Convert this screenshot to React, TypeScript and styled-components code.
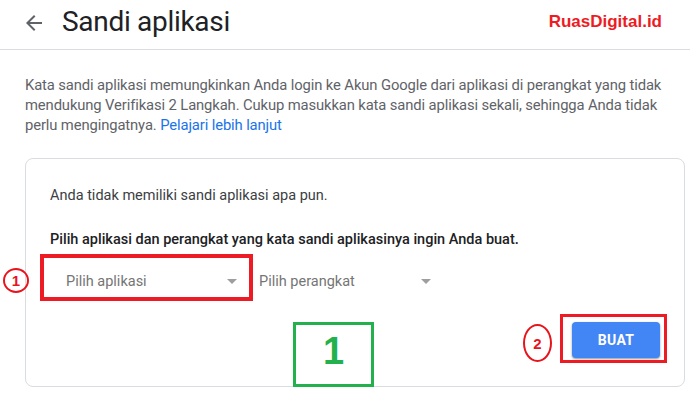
import styled, { createGlobalStyle } from 'styled-components';

const GlobalStyle = createGlobalStyle`
  body {
    margin: 0;
    background: #fff;
    font-family: Roboto, "Liberation Sans", Arial, sans-serif;
  }
`;

const Page = styled.div`
  position: relative;
  width: 690px;
  height: 395px;
  overflow: hidden;
`;

const Header = styled.header`
  display: flex;
  align-items: center;
  height: 49px;
  border-bottom: 1px solid #dadce0;
  padding-left: 22px;
`;

const BackButton = styled.span`
  display: flex;
  width: 24px;
  height: 24px;
  color: #5f6368;
  margin-top: -3px;
`;

const Title = styled.h1`
  margin: -6px 0 0 16px;
  font-size: 28px;
  font-weight: 400;
  color: #202124;
  letter-spacing: -0.3px;
  flex: 1;
`;

const Brand = styled.span`
  font-family: "Liberation Sans", Arial, sans-serif;
  font-weight: 700;
  font-size: 17px;
  color: #ed1c24;
  margin-right: 28px;
  margin-top: -6px;
`;

const Intro = styled.p`
  margin: 25px 0 0 25px;
  font-size: 14.8px;
  line-height: 20px;
  letter-spacing: -0.12px;
  color: #5f6368;
  white-space: nowrap;
`;

const Link = styled.a`
  color: #1a73e8;
  text-decoration: none;
`;

const Card = styled.section`
  margin: 23px 5px 0 25px;
  height: 229px;
  box-sizing: border-box;
  border: 1px solid #dadce0;
  border-radius: 8px;
  padding: 27px 24px 0 24px;
`;

const Text = styled.p<{ $strong?: boolean }>`
  margin: 0 0 24px;
  font-size: 14.5px;
  line-height: 20px;
  font-weight: ${p => (p.$strong ? 500 : 400)};
  color: ${p => (p.$strong ? '#202124' : '#3c4043')};
`;

const SelectRow = styled.div`
  display: flex;
  margin-top: -15px;
`;

const Select = styled.div<{ $width: number; $left: number; $right: number }>`
  display: flex;
  align-items: center;
  justify-content: space-between;
  height: 44px;
  width: ${p => p.$width}px;
  box-sizing: border-box;
  padding: 0 ${p => p.$right}px 0 ${p => p.$left}px;
  font-size: 14.5px;
  color: #757575;
`;

const Caret = styled.span`
  width: 0;
  height: 0;
  border-left: 5px solid transparent;
  border-right: 5px solid transparent;
  border-top: 5px solid #9e9e9e;
`;

const Actions = styled.div`
  display: flex;
  justify-content: flex-end;
  margin-top: 19px;
`;

const Button = styled.button`
  width: 88px;
  height: 36px;
  border: none;
  border-radius: 4px;
  background: #4285f4;
  color: #fff;
  font-family: Roboto, "Liberation Sans", Arial, sans-serif;
  font-weight: 700;
  font-size: 14px;
  letter-spacing: 0.3px;
  box-shadow: 0 1px 2px rgba(0, 0, 0, 0.3), 0 1px 3px rgba(0, 0, 0, 0.15);
`;

const Frame = styled.div<{ $x: number; $y: number; $w: number; $h: number; $color: string; $t: number }>`
  position: absolute;
  left: ${p => p.$x}px;
  top: ${p => p.$y}px;
  width: ${p => p.$w}px;
  height: ${p => p.$h}px;
  box-sizing: border-box;
  border: ${p => p.$t}px solid ${p => p.$color};
  display: flex;
  align-items: center;
  justify-content: center;
`;

const Ring = styled.div<{ $x: number; $y: number; $w: number; $h: number }>`
  position: absolute;
  left: ${p => p.$x}px;
  top: ${p => p.$y}px;
  width: ${p => p.$w}px;
  height: ${p => p.$h}px;
  box-sizing: border-box;
  border: 2px solid #e8141c;
  border-radius: 50%;
  display: flex;
  align-items: center;
  justify-content: center;
  font-family: "Liberation Sans", Arial, sans-serif;
  font-weight: 700;
  font-size: 15px;
  color: #e8141c;
`;

const BigDigit = styled.span`
  font-family: "Liberation Sans", Arial, sans-serif;
  font-weight: 700;
  font-size: 38px;
  color: #22b14c;
  margin-top: -6px;
`;

export default function App() {
  return (
    <>
      <GlobalStyle />
      <Page>
        <Header>
          <BackButton>
            <svg viewBox="0 0 24 24" width="24" height="24" fill="currentColor">
              <path d="M20 11H7.83l5.59-5.59L12 4l-8 8 8 8 1.41-1.41L7.83 13H20v-2z" />
            </svg>
          </BackButton>
          <Title>Sandi aplikasi</Title>
          <Brand>RuasDigital.id</Brand>
        </Header>
        <Intro>
          Kata sandi aplikasi memungkinkan Anda login ke Akun Google dari aplikasi di perangkat yang tidak
          <br />
          mendukung Verifikasi 2 Langkah. Cukup masukkan kata sandi aplikasi sekali, sehingga Anda tidak
          <br />
          perlu mengingatnya. <Link href="#">Pelajari lebih lanjut</Link>
        </Intro>
        <Card>
          <Text>Anda tidak memiliki sandi aplikasi apa pun.</Text>
          <Text $strong>Pilih aplikasi dan perangkat yang kata sandi aplikasinya ingin Anda buat.</Text>
          <SelectRow>
            <Select $width={201} $left={16} $right={14}>
              Pilih aplikasi
              <Caret />
            </Select>
            <Select $width={180} $left={8} $right={0}>
              Pilih perangkat
              <Caret />
            </Select>
          </SelectRow>
          <Actions>
            <Button>BUAT</Button>
          </Actions>
        </Card>

        <Frame $x={40} $y={254} $w={213} $h={47} $color="#ed1c24" $t={4} />
        <Ring $x={3} $y={268} $w={26} $h={25}>1</Ring>
        <Frame $x={293} $y={322} $w={81} $h={65} $color="#22b14c" $t={3}>
          <BigDigit>1</BigDigit>
        </Frame>
        <Ring $x={523} $y={324} $w={29} $h={38}>2</Ring>
        <Frame $x={560} $y={314} $w={107} $h={49} $color="#ed1c24" $t={3} />
      </Page>
    </>
  );
}
